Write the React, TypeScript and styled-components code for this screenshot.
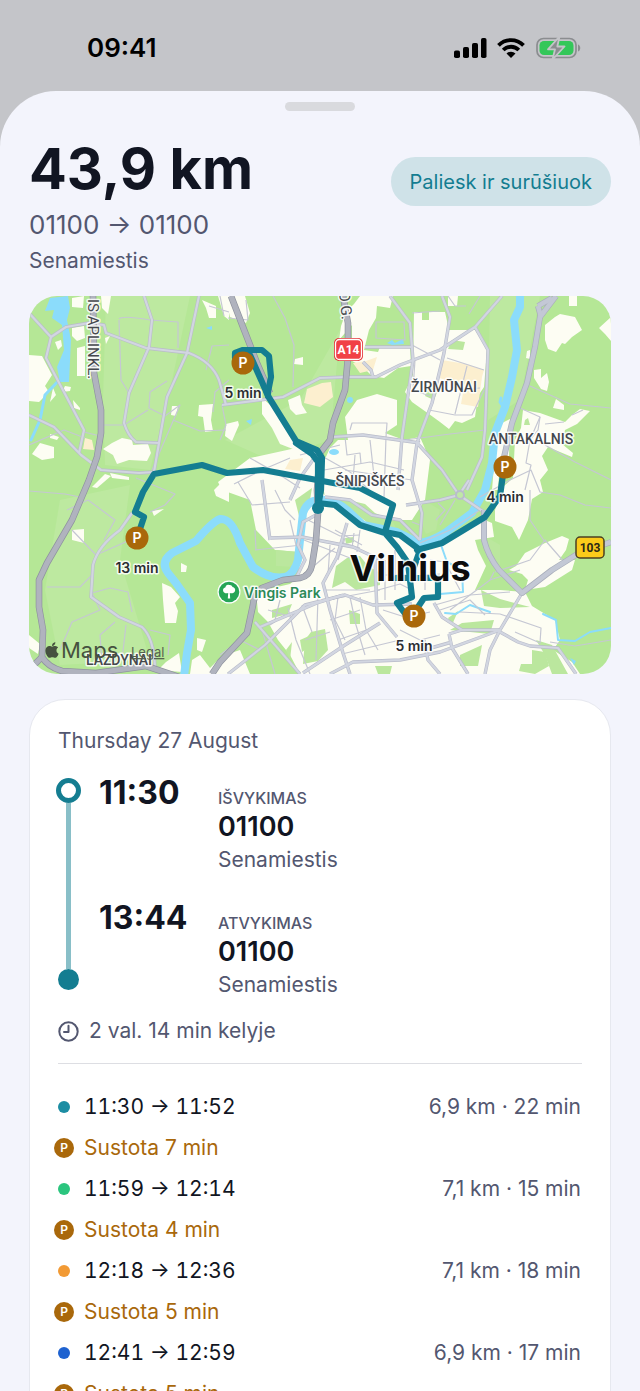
import React from 'react'
import styled, { createGlobalStyle } from 'styled-components'
import { FaApple } from 'react-icons/fa'

const ink = '#111522';
const slate = '#535770';
const teal = '#147d91';
const amber = '#a9680b';
const sheetBg = '#f3f4fc';

const GlobalStyle = createGlobalStyle`
  *, *::before, *::after {
    box-sizing: border-box;
  }
  body {
    margin: 0;
    background: #c4c5c9;
    color: ${ink};
    font-family: Inter, 'Liberation Sans', sans-serif;
    font-size: 22px;
    line-height: 28px;
  }
  h1, h2, p, ul, ol {
    margin: 0;
    padding: 0;
    font: inherit;
  }
  ul, ol {
    list-style: none;
  }
`

const Screen = styled.div`
  display: flex;
  flex-direction: column;
  height: 100vh;
  overflow: hidden;
`

const StatusBar = styled.header`
  display: flex;
  flex-shrink: 0;
  justify-content: space-between;
  align-items: center;
  height: 91px;
  padding: 4px 59px 0 87px;
  color: black;
`

const Clock = styled.span`
  font-size: 26px;
  font-weight: 600;
`

const StatusIcons = styled.div`
  display: flex;
  align-items: center;
  gap: 10px;
`

const Sheet = styled.main`
  flex: 1;
  padding: 11px 29px 0;
  border-radius: 56px 56px 0 0;
  background: ${sheetBg};
  overflow: hidden;
`

const Grabber = styled.div`
  width: 70px;
  height: 9px;
  margin: 0 auto 28px;
  border-radius: 5px;
  background: #d9dade;
`

const SheetHeader = styled.div`
  display: flex;
  justify-content: space-between;
  align-items: flex-start;
  margin-bottom: 21px;
`

const Distance = styled.h1`
  font-size: 56px;
  line-height: 60px;
  font-weight: 700;
`

const Route = styled.p`
  margin: 10px 0 6px;
  color: ${slate};
  font-size: 26px;
  line-height: 32px;
`

const District = styled.p`
  color: ${slate};
  font-size: 21px;
`

const SortButton = styled.button`
  height: 49px;
  margin-top: 18px;
  padding: 0 19px;
  border: 0;
  border-radius: 25px;
  background: #cfe2e8;
  color: ${teal};
  font: inherit;
  font-size: 20px;
  cursor: pointer;
`

const MapFrame = styled.div`
  margin-bottom: 25px;
  border-radius: 28px;
  overflow: hidden;
  svg {
    display: block;
  }
`

const Card = styled.section`
  padding: 27px 24px;
  border: 1px solid #e6e8ef;
  border-radius: 36px;
  background: white;
`

const DayTitle = styled.h2`
  padding: 0 4px;
  color: ${slate};
  font-size: 21px;
`

const Timeline = styled.div`
  display: flex;
  gap: 18px;
  padding: 0 2px;
  margin: 19px 0 18px;
`

const Rail = styled.div`
  display: flex;
  flex-direction: column;
  align-items: center;
  width: 25px;
  padding: 4px 0 9px;
`

const RailStart = styled.span`
  width: 25px;
  height: 25px;
  border: 5px solid ${teal};
  border-radius: 50%;
`

const RailLine = styled.span`
  flex: 1;
  width: 5px;
  background: #89bfc8;
`

const RailEnd = styled.span`
  width: 21px;
  height: 21px;
  border-radius: 50%;
  background: ${teal};
`

const Stops = styled.ol`
  display: flex;
  flex: 1;
  flex-direction: column;
  gap: 25px;
`

const Stop = styled.li`
  display: flex;
`

const StopTime = styled.time`
  width: 119px;
  font-size: 32px;
  line-height: 38px;
  font-weight: 700;
`

const Place = styled.div`
  display: flex;
  flex-direction: column;
  gap: 2px;
  padding-top: 14px;
`

const PlaceLabel = styled.span`
  color: ${slate};
  font-size: 16px;
  line-height: 20px;
  font-weight: 500;
`

const PlaceCode = styled.strong`
  font-size: 27px;
  line-height: 34px;
  font-weight: 600;
`

const Duration = styled.p`
  display: flex;
  align-items: center;
  gap: 10px;
  padding-bottom: 18px;
  margin: 0 4px 22px;
  border-bottom: 1px solid #dddee3;
  color: ${slate};
  font-size: 21px;
`

const Leg = styled.li`
  display: flex;
  align-items: center;
  gap: 10px;
  height: 41px;
  padding-right: 5px;
  font-size: 21px;
`

const Marker = styled.span`
  display: flex;
  justify-content: center;
  width: 20px;
`

const Dot = styled.span<{ $color: string }>`
  width: 12px;
  height: 12px;
  border-radius: 50%;
  background: ${(p) => p.$color};
`

const ParkingBadge = styled.span`
  display: flex;
  justify-content: center;
  align-items: center;
  width: 20px;
  height: 20px;
  border-radius: 50%;
  background: ${amber};
  color: white;
  font-size: 12px;
  font-weight: 600;
`

const LegTime = styled.span`
  flex: 1;
  font-variant-numeric: tabular-nums;
`

const LegInfo = styled.span`
  color: ${slate};
`

const StopInfo = styled.span`
  color: ${amber};
`

const legs = [
  { from: '11:30', to: '11:52', info: '6,9 km · 22 min', stop: 7, color: '#1c8da3' },
  { from: '11:59', to: '12:14', info: '7,1 km · 15 min', stop: 4, color: '#2bc57e' },
  { from: '12:18', to: '12:36', info: '7,1 km · 18 min', stop: 5, color: '#f29a34' },
  { from: '12:41', to: '12:59', info: '6,9 km · 17 min', stop: 5, color: '#1e62d0' },
];

const stops = [
  { time: '11:30', label: 'IŠVYKIMAS' },
  { time: '13:44', label: 'ATVYKIMAS' },
];

// built-up blocks
const blocks = [
  '225,296 245,296 250,313 246,323 230,317',
  '295,359 303,357 303,365 294,364',
  '360,296 393,296 390,308 377,306 376,318 369,330 364,350 378,352 380,347 410,348 411,366 398,368 384,378 372,376 362,366 352,361 352,325 339,340 341,326 346,312 354,304',
  '288,400 300,395 302,405 307,413 296,415 290,409',
  '262,398 274,408 286,430 298,446 298,451 280,444 272,428 262,414',
  '226,424 238,421 239,425 232,441 225,436',
  '345,417 350,410 357,400 377,394 397,400 397,425 385,433 404,440 420,437 430,460 425,500 412,520 390,520 370,512 350,500 325,497 320,470 330,448 338,440 348,440',
  '218,482 250,458 287,450 300,447 320,453 320,490 334,505 400,534 424,541 450,535 480,518 492,523 494,537 475,540 478,550 486,566 475,590 500,590 525,592 532,606 555,620 560,640 553,650 572,662 580,674 300,674 290,655 278,640 268,622 258,612 256,592 290,584 298,577 300,552 275,550 256,530 250,500 222,490',
  '414,312 422,312 422,320 429,320 429,312 445,312 449,330 475,330 484,342 487,350 484,387 478,396 475,417 462,423 455,421 449,429 440,422 429,414 412,402 405,392 413,375',
  '448,296 458,296 457,306 448,306',
  '545,325 555,317 560,314 575,317 582,330 572,337 565,344 562,343 556,352 548,349 545,340',
  '569,296 577,296 577,306 569,306',
  '599,328 611,317 611,341 605,334',
  '534,370 541,369 541,378 547,373 549,382 547,391 541,389 534,378',
  '527,351 530,350 530,359 526,358',
  '556,399 564,405 564,410 553,408',
  '523,410 540,413 565,422 572,415 580,409 590,411 577,424 565,430 562,444 573,453 572,457 548,447 542,456 548,470 540,480 543,492 532,499 528,520 519,540 512,527 495,521 495,510 504,486 513,478 515,440 521,428',
  '502,423 510,419 509,457 500,460 498,490 492,490 496,440',
  '509,570 516,566 525,553 545,543 562,536 569,539 566,550 559,560 575,560 572,570 545,587 525,590 528,580 522,574',
  '29,355 42,356 52,375 45,386 49,392 39,402 29,401',
  '77,348 85,346 85,376 77,376',
  '72,298 84,296 83,308 72,307',
  '101,296 111,296 108,314 102,308',
  '72,328 84,326 85,338 77,341 72,336',
  '55,342 61,340 62,346 58,350',
  '53,388 56,395 50,402',
  '65,386 71,387 70,391 62,392',
  '73,400 80,408 80,410 74,408',
  '32,454 40,443 54,447 54,458 42,460',
  '50,434 59,437 57,440 50,438',
  '103,449 112,443 122,438 132,440 133,445 148,444 151,453 147,461 129,460 117,464 113,455',
  '199,405 213,404 211,420 213,431 205,432 203,417 198,416',
  '172,406 178,406 176,416 171,415',
  '92,487 105,474 111,476 97,488',
  '110,473 129,477 129,480 112,478',
  '202,300 216,306 216,318 209,318 206,308',
  '218,296 229,296 229,320 224,316',
  '105,338 110,336 106,344',
  '72,530 84,529 84,543 72,540',
  '162,583 171,587 180,597 175,603 178,611 176,623 165,623 163,600',
  '152,511 164,509 154,516',
  '214,490 222,482 229,485 229,502 216,496',
  '181,563 187,566 186,572 181,572',
  '197,638 206,640 202,652 197,650',
  '192,660 200,655 210,668 222,656 240,650 250,674 190,674',
  '29,635 40,644 38,654 29,648',
  '166,662 179,653 182,672 158,670',
];

const parks = [
  '347,558 360,556 368,566 380,573 380,585 365,588 356,590 345,582 332,588 336,566',
  '311,632 325,629 328,650 318,661 303,664 305,640',
  '300,640 309,636 308,648 302,652',
  '349,610 360,614 360,624 350,624',
  '424,500 440,510 436,530 426,534 420,520',
  '481,590 500,599 530,607 500,608 484,606',
  '462,623 494,620 490,634 470,632 450,630',
  '532,650 545,652 549,666 535,674 519,671 521,664 532,664',
  '536,640 552,645 568,674 552,674 545,655',
  '460,655 482,645 478,666 460,666',
  '276,550 297,552 296,567 276,566',
  '452,340 465,342 463,350 448,349',
  '430,383 438,390 434,400 425,396',
  '340,498 365,504 375,513 392,520 396,528 372,526 348,508',
  '286,650 292,642 290,660',
  '448,618 458,611 452,625',
  '295,500 312,488 310,500 299,516',
  '488,538 500,545 500,570 488,560',
  '272,610 292,604 288,614 272,618',
  '525,420 528,418 530,425 524,425',
  '345,538 354,537 354,542 346,544',
  '375,666 392,666 390,674 378,674',
];

const commercial = [
  '307,389 322,383 331,382 333,397 320,407 304,403',
  '353,363 366,361 377,357 373,370 360,373',
  '442,360 466,364 484,370 482,377 478,407 461,404 464,387 440,378',
  '85,438 92,440 94,450 83,449',
  '290,460 303,458 300,471 285,469',
];

const minorRoads = [
  'M119 319 Q122 315 150 320 L178 322 L178 348',
  'M119 320 L121 380 L129 393',
  'M152 470 L180 405 L165 416 L149 408 L150 392 L167 381',
  'M103 425 L124 425 L148 410',
  'M85 438 L64 430 L29 445 M84 432 L100 436',
  'M173 420 L200 431 L226 430 M206 370 L212 346 L229 345',
  'M273 296 L285 318 L294 345 L293 387',
  'M29 491 L65 494 L85 498 M67 510 L88 500 L115 520 L104 540',
  'M47 587 L80 587 L92 575 M60 650 L72 622 L100 610 L92 593 L110 588 L128 592 L132 612',
  'M115 622 L100 635 L102 662 M126 625 L122 660 M150 630 L170 635 L168 655',
  'M136 478 L175 494 L165 505 L150 512 M72 530 L96 555 L130 540',
  'M376 322 L380 322 L404 322 L405 340 L376 338 Z',
  'M350 430 L352 423 L387 423 L386 437 M345 437 L347 455 L360 453 L361 464 M370 440 L375 485 M386 437 L384 498 M355 455 L353 480 M345 470 L412 480',
  'M320 455 L350 472 L380 500 M300 455 L340 445 M324 470 L370 462 L404 470',
  'M234 484 L262 470 L290 458 M250 458 L280 475 L300 488 M238 482 L252 505 L290 502 M275 490 L285 510 L295 520',
  'M255 550 L302 545 M255 530 L256 550 M290 520 L296 545 M304 540 L350 558 M308 520 L340 536 L360 535 M315 565 L335 548 M330 545 L328 575',
  'M335 530 L362 545 M345 538 L338 560 M354 533 L352 548 M360 530 L357 552 M340 542 L360 548 M280 600 L275 620 M262 630 L275 674 M288 608 L296 640 L310 674 M302 605 L312 632',
  'M325 590 L370 590 M327 600 L380 590 M338 597 L335 620 L345 640 M350 597 L356 625 L365 655 M360 597 L366 630 L378 650 M330 620 L360 610 M338 640 L372 628 M342 654 L400 640',
  'M378 590 L400 584 L412 590 M383 610 L408 618 M385 575 L410 575 M385 560 L385 600 M395 550 L395 590 M420 575 L440 574 M425 560 L425 590',
  'M412 616 L430 612 M400 630 L420 640 L440 635 M430 560 L445 562 L460 590 M435 605 L470 595 L510 592',
  'M450 610 L490 580 L520 570 M490 580 L494 572 M440 610 L470 600 L485 615 M460 612 L500 614 L541 628 L540 643 L515 632',
  'M495 572 L530 560 L545 540 L565 563 M530 490 L530 520 L545 542',
  'M480 497 L510 480 L531 470 L540 492 L560 495 L585 505 L611 508',
  'M525 490 L531 465 L526 463 L530 440 L540 417 M530 386 L570 404 L611 408',
  'M545 424 L564 422 M520 408 L540 417 L538 430 L530 440 M545 445 L575 462 L611 480 M572 415 L583 410',
  'M447 358 L484 370 M467 366 L455 414 M429 410 L455 415 L472 415 L484 390 M412 345 L440 360 M405 440 L450 434 L485 430',
  'M412 313 L440 311 M469 314 L480 296 M415 360 L413 390 L430 396 M455 390 L480 388 M448 296 L455 306 L466 306',
  'M420 543 L450 530 L480 510 M412 522 L420 525 M455 500 L440 525 M436 520 L445 510 L438 503',
  'M550 642 L575 646 L611 640',
  'M222 405 L226 425 L220 440 M229 380 L215 392 L213 412',
  'M209 306 L229 312 M220 296 L224 316 M228 318 L248 320 L246 300',
  'M220 655 L240 640 L260 650 M268 610 L285 615 L270 625 M318 596 L316 660 M305 640 L330 632',
];

const mediumRoads = [
  'M29 415 L54 427 L81 455 L101 470 L139 473 L154 472 L159 443 L167 397 L187 353 L199 296',
  'M29 313 L51 337 L46 358 L84 430 L79 453',
  'M51 337 L66 327 L89 323 L104 325 L106 333 L146 348 L189 353 Q212 362 219 380 L226 405',
  'M222 405 L283 397 L320 378 L347 377 L376 377 L400 365 L440 350 L475 327 L502 296',
  'M144 296 L152 320 L149 347 L129 393 L124 423 Q128 436 136 442 L159 443',
  'M132 513 L120 530 Q98 546 93 565 L91 597 L119 617 L142 627 Q154 638 155 668',
  'M442 296 L450 317 L444 353 L432 403 L417 443 L412 480 L422 513 L420 540',
  'M475 327 L488 350 L485 430 L482 457 L467 490',
  'M417 443 L442 470 L459 495 L484 512',
  'M390 296 L410 323 L413 360 L402 437 L398 490',
  'M332 437 L363 435 L420 443 M365 347 L412 347 M363 362 L371 370 L373 377',
  'M406 505 L440 500 L459 495 L469 480',
  'M270 538 L302 537 L353 547 L385 562 M262 480 L270 540',
  'M347 523 L337 557 L323 583 L330 610 L343 653 L350 674',
  'M228 674 L265 645 L305 605 L345 595 L373 605 L412 604',
  'M255 622 L300 674 M260 627 L317 603 L343 595',
  'M375 560 L377 613 L397 637 M303 673 L345 645 L380 623',
  'M330 674 L353 662 L400 660 L440 652 L500 630',
  'M500 630 L462 630 L442 617 L434 603 M500 632 L518 642 L530 646 L558 648 L576 674',
  'M449 634 L452 648 L468 674 M462 630 L449 634 M424 640 L428 660 L440 674 M424 650 L452 642',
  'M522 593 L500 630 L490 650 L485 674',
  'M316 515 L303 522 L298 545 L305 560 L296 578',
  'M325 497 L350 500 L372 515 L400 520 L420 540 M320 450 L300 478 L290 500',
];

const highways = [
  'M93 296 L94 373 L101 410 L101 433 L97 457 L89 480 L72 520 L47 563 L39 580 L39 607 L43 630 L42 657 Q48 667 62 671 L96 673 L146 666 L182 678',
  'M29 670 L42 657',
  'M343 296 L348 323 L348 357 L345 390 L333 423 L330 440 L320 453 L317 490 L318 513 L316 540 L312 565 Q310 576 300 578 L283 580 L262 588 Q254 594 253 605 L247 633 L220 662 L212 674',
  'M231 296 L243 327 L257 363 L270 393',
];

const eastRoads = [
  'M556 296 L540 317 L535 347 L527 383 L512 423 L504 457',
  'M538 306 L552 298 M538 306 L541 317',
  'M484 510 L484 540 Q488 556 499 570 L522 593 L552 570 L579 553 L611 542',
];

const river = 'M520 296 L520 307 L514 320 L517 350 L512 377 L505 407 L495 433 L492 463 L485 490 L472 513 L445 533 Q430 542 419 543 L397 532 L363 525 L347 510 Q338 502 325 500 Q308 498 303 513 L300 540 L298 560 Q294 574 285 577 Q270 580 253 567 L240 543 Q232 518 220 519 Q212 522 196 541 L172 553 Q160 562 168 573 L176 583 L190 603 L191 630 L187 653 L184 676';

const routes = [
  'M235 358 L235 353 L243 350 L262 350 L269 356 L271 377 L268 392 L268 396',
  'M250 355 L262 382 L268 396 L296 441 L317 450 L322 458 L321 490 L318 507',
  'M296 443 L312 454 L318 462 L318 507',
  'M138 535 L144 517 L135 512 L143 492 L154 474 L202 465 L227 473 L263 470 L317 480 L360 488 L393 505 L385 532',
  'M318 503 L335 505 L360 525 L385 533 L397 547 L408 563 L412 597 L397 603 L406 615',
  'M385 532 L400 535 L420 550 L413 570',
  'M504 467 L500 496 L485 517 L442 543 L417 550',
  'M396 578 L438 578 L438 597 L424 598 L416 610',
];

const MapText = styled.text`
  fill: #45484d;
  stroke: rgba(255, 255, 255, 0.85);
  stroke-width: 3px;
  stroke-linejoin: round;
  paint-order: stroke;
`

const AreaLabel = styled(MapText)`
  font: 500 14px Roboto, sans-serif;
  text-anchor: middle;
`

const StreetLabel = styled(MapText)`
  font: 400 15px Roboto, sans-serif;
`

const CityLabel = styled(MapText)`
  fill: #0c0c0d;
  font: 700 36px Inter, sans-serif;
  text-anchor: middle;
`

const PinLabel = styled(MapText)`
  fill: #2b2d31;
  font: 600 14px Inter, sans-serif;
  text-anchor: middle;
`

const ParkLabel = styled(MapText)`
  fill: #2c8a58;
  font: 600 14px Inter, sans-serif;
`

const ShieldText = styled.text`
  font: 700 12px Roboto, sans-serif;
  text-anchor: middle;
`

function Labels() {
  return (
    <>
      <AreaLabel x={444} y={392}>ŽIRMŪNAI</AreaLabel>
      <AreaLabel x={531} y={444}>ANTAKALNIS</AreaLabel>
      <AreaLabel x={370} y={486}>ŠNIPIŠKĖS</AreaLabel>
      <AreaLabel x={119} y={665}>LAZDYNAI</AreaLabel>
      <StreetLabel transform="translate(88 299) rotate(90)">IS APLINKL.</StreetLabel>
      <StreetLabel transform="translate(339 292) rotate(84)">O G.</StreetLabel>
      <CityLabel x={410} y={581}>Vilnius</CityLabel>
    </>
  )
}

function Pin({ x, y, label }: { x: number; y: number; label: string }) {
  return (
    <g>
      <circle cx={x} cy={y} r={11.5} fill={amber} />
      <text x={x} y={y + 5} fill="white" fontSize={14} fontWeight={600} textAnchor="middle">P</text>
      <PinLabel x={x} y={y + 35}>{label}</PinLabel>
    </g>
  )
}

function RouteMap() {
  return (
    <svg viewBox="29 296 582 378" width="100%" role="group" aria-label="Vilnius">
      <rect x="29" y="296" width="582" height="378" fill="#b5e796" />
      <g fill="#bde9a0">
        <path d="M106 296 L190 296 L170 390 L150 470 L105 465 L103 400 Z" />
        <path d="M60 500 L130 485 L120 560 L150 660 L60 665 L45 590 Z" />
        <path d="M490 296 L540 296 L520 400 L488 420 Z" />
        <path d="M225 440 L300 400 L340 330 L330 440 L270 460 Z" />
      </g>
      <g fill="#fdfdf3">
        {blocks.map((p) => <polygon key={p} points={p} />)}
      </g>
      <g fill="#bbe79e">
        {parks.map((p) => <polygon key={p} points={p} />)}
      </g>
      <g fill="#fcefcf">
        {commercial.map((p) => <polygon key={p} points={p} />)}
      </g>
      <g fill="#8bdcfb">
        <path d="M50 298 L68 296 L70 308 L67 320 L71 340 L69 382 L60 382 L57 367 L64 350 L62 325 L52 318 L54 310 L45 311 Z" />
        <path d="M387 343 L392 340 L395 343 L403 339 L404 344 L392 345 Z" />
        <circle cx="350" cy="400" r="3" />
        <ellipse cx="334" cy="452" rx="5" ry="3" />
        <path d="M206 328 L212 326 L212 330 Z M246 421 L252 419 L251 425 Z" />
        <path d="M570 658 L576 661 L574 665 Z" />
      </g>
      <g fill="none" stroke="#8bdcfb" strokeLinecap="round" strokeLinejoin="round">
        <path d="M61 378 L45 395 L40 420 L31 440" strokeWidth="3" />
        <path d={river} strokeWidth="8" />
        <path d="M504 408 L500 402 L501 398" strokeWidth="3" />
        <path d="M441 545 L447 562 L462 570 L463 592 L440 594" strokeWidth="2" />
        <path d="M445 613 L456 614 L470 605 L490 612 M543 614 L556 620 L558 640 L575 641 L590 632 L611 628" strokeWidth="2" />
      </g>
      <g fill="none" strokeLinejoin="round">
        <g stroke="#c5c7d3" strokeWidth="1.2">
          {minorRoads.map((d) => <path key={d} d={d} />)}
        </g>
        <g stroke="#b9bcca" strokeWidth="3.4">
          {mediumRoads.map((d) => <path key={d} d={d} />)}
        </g>
        <g stroke="#d2d6e1" strokeWidth="2.2">
          {mediumRoads.map((d) => <path key={d} d={d} />)}
        </g>
        <g stroke="#a9aebb" strokeWidth="6">
          {eastRoads.map((d) => <path key={d} d={d} />)}
        </g>
        <g stroke="#c3c8d5" strokeWidth="4.6">
          {eastRoads.map((d) => <path key={d} d={d} />)}
        </g>
        <circle cx="460" cy="495" r="4" fill="#bfe8a5" stroke="#b9bdcb" strokeWidth="2" />
        <g stroke="#8f939f" strokeWidth="6.6">
          {highways.map((d) => <path key={d} d={d} />)}
        </g>
        <g stroke="#b0b3be" strokeWidth="5.2">
          {highways.map((d) => <path key={d} d={d} />)}
        </g>
        <g stroke={teal} strokeWidth="6.2" strokeLinecap="round">
          {routes.map((d) => <path key={d} d={d} />)}
        </g>
      </g>
      <circle cx="318" cy="508" r="6" fill={teal} />

      <rect x="334" y="338" width="29" height="23" rx="5" fill="#e5383d" />
      <rect x="335.500" y="339.500" width="26" height="20" rx="4" fill="#f14146" stroke="white" strokeWidth="1.300" />
      <ShieldText x={348.5} y={354} fill="white">A14</ShieldText>
      <rect x="576" y="537" width="28" height="21" rx="4" fill="#fbcb1a" stroke="#4b4122" strokeWidth="1.500" />
      <ShieldText x={590} y={552} fill="#2d2815">103</ShieldText>

      <circle cx="229" cy="592" r="11.5" fill="white" />
      <circle cx="229" cy="592" r="10.300" fill="#25a557" />
      <path d="M229 585 C231 584.500 232.500 586 232.500 587 C235 587.500 236 590 234.500 592 C233.500 593.500 231 593.500 229.800 593 L230.200 598.500 H227.800 L228.200 593 C226 593.800 224 593 223.300 591.500 C222.500 589.500 223.500 587.800 225.500 587.200 C225.700 585.500 227 584.500 229 585 Z" fill="white" />
      <ParkLabel x={244} y={598}>Vingis Park</ParkLabel>

      <Labels />
      <Pin x={243} y={363} label="5 min" />
      <Pin x={505} y={467} label="4 min" />
      <Pin x={137} y={538} label="13 min" />
      <Pin x={414} y={616} label="5 min" />

      <FaApple x={43} y={641} size={18} color="#46513f" />
      <text x="61" y="658" fontSize="22" fill="#46513f">Maps</text>
      <a href="#legal">
        <text x="131" y="657" fontSize="13" fill="#56624f" textDecoration="underline">Legal</text>
      </a>
    </svg>
  )
}

function Signal() {
  return (
    <svg width="33" height="20" viewBox="0 0 33 20" fill="black" aria-hidden="true">
      <rect x="0" y="12.500" width="6" height="7.500" rx="1.800" />
      <rect x="9" y="9" width="6" height="11" rx="1.800" />
      <rect x="18" y="5" width="6" height="15" rx="1.800" />
      <rect x="27" y="0" width="5.500" height="20" rx="1.800" />
    </svg>
  )
}

function Wifi() {
  return (
    <svg width="28" height="20" viewBox="0 0 28 20" aria-hidden="true">
      <g fill="none" stroke="black" strokeWidth="3.800">
        <path d="M1.500 7.300 A17.500 17.500 0 0 1 26.500 7.300" />
        <path d="M6.200 12 A11 11 0 0 1 21.800 12" />
      </g>
      <path d="M14 20 L9.500 15.500 A6.500 6.500 0 0 1 18.500 15.500 Z" fill="black" />
    </svg>
  )
}

function Battery() {
  return (
    <svg width="46" height="24" viewBox="0 0 46 24" aria-hidden="true">
      <rect x="2" y="2.500" width="39" height="19" rx="6.500" fill="none" stroke="#8b8d90" strokeWidth="1.700" />
      <path d="M43 8.500 C46 9.500 46 14.500 43 15.500 Z" fill="#8b8d90" />
      <rect x="4.500" y="5" width="34" height="14" rx="4.500" fill="#34c759" />
      <path d="M24.500 0.500 L13 13.300 H20 L17.500 23.500 L29.500 10.500 H22.300 Z" fill="#8b8d90" stroke="#c4c5c9" strokeWidth="1.800" strokeLinejoin="round" />
    </svg>
  )
}

function ClockIcon() {
  return (
    <svg width="21" height="21" viewBox="0 0 21 21" fill="none" stroke={slate} strokeWidth="2" strokeLinecap="round" strokeLinejoin="round" aria-hidden="true">
      <circle cx="10.500" cy="10.500" r="9.200" />
      <path d="M10.500 4.800 V11 H6" />
    </svg>
  )
}

export default function App() {
  return (
    <Screen>
      <GlobalStyle />
      <StatusBar>
        <Clock>09:41</Clock>
        <StatusIcons>
          <Signal />
          <Wifi />
          <Battery />
        </StatusIcons>
      </StatusBar>
      <Sheet>
        <Grabber />
        <SheetHeader>
          <div>
            <Distance>43,9 km</Distance>
            <Route>01100 → 01100</Route>
            <District>Senamiestis</District>
          </div>
          <SortButton type="button">Paliesk ir surūšiuok</SortButton>
        </SheetHeader>
        <MapFrame>
          <RouteMap />
        </MapFrame>
        <Card>
          <DayTitle>Thursday 27 August</DayTitle>
          <Timeline>
            <Rail>
              <RailStart />
              <RailLine />
              <RailEnd />
            </Rail>
            <Stops>
              {stops.map((s) => (
                <Stop key={s.time}>
                  <StopTime>{s.time}</StopTime>
                  <Place>
                    <PlaceLabel>{s.label}</PlaceLabel>
                    <PlaceCode>01100</PlaceCode>
                    <District>Senamiestis</District>
                  </Place>
                </Stop>
              ))}
            </Stops>
          </Timeline>
          <Duration>
            <ClockIcon />
            2 val. 14 min kelyje
          </Duration>
          <ul>
            {legs.map((leg) => (
              <React.Fragment key={leg.from}>
                <Leg>
                  <Marker><Dot $color={leg.color} /></Marker>
                  <LegTime>{leg.from} → {leg.to}</LegTime>
                  <LegInfo>{leg.info}</LegInfo>
                </Leg>
                <Leg>
                  <ParkingBadge>P</ParkingBadge>
                  <StopInfo>Sustota {leg.stop} min</StopInfo>
                </Leg>
              </React.Fragment>
            ))}
          </ul>
        </Card>
      </Sheet>
    </Screen>
  )
}
